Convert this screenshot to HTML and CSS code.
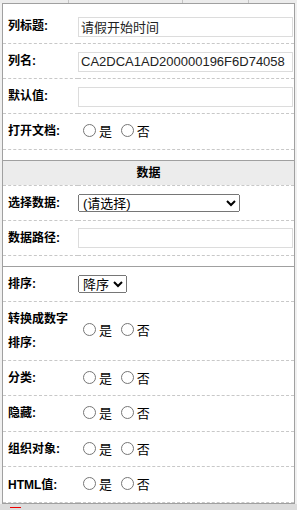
FILE: index.html
```html
<!DOCTYPE html>
<html lang="zh-CN">
<head>
  <meta charset="UTF-8" />
  <title>列属性</title>
  <link rel="stylesheet" href="styles.css">
</head>
<body>
  <div class="topbar">
    <span class="tab tab-a"></span>
    <span class="tab tab-b"></span>
    <span class="tab tab-c"></span>
  </div>

  <div class="panel">
    <table class="section first">
      <tr>
        <td class="label">列标题:</td>
        <td class="field"><input type="text" class="txt" value="请假开始时间" /></td>
      </tr>
      <tr>
        <td class="label">列名:</td>
        <td class="field"><input type="text" class="txt" value="CA2DCA1AD200000196F6D74058" /></td>
      </tr>
      <tr>
        <td class="label">默认值:</td>
        <td class="field"><input type="text" class="txt" value="" /></td>
      </tr>
      <tr>
        <td class="label">打开文档:</td>
        <td class="field">
          <input type="radio" name="openDoc" /><span class="opt">是</span>
          <input type="radio" name="openDoc" /><span class="opt">否</span>
        </td>
      </tr>
    </table>

    <table class="section">
      <tr>
        <td class="group-title" colspan="2">数据</td>
      </tr>
      <tr>
        <td class="label">选择数据:</td>
        <td class="field">
          <select class="sel sel-data">
            <option>(请选择)</option>
          </select>
        </td>
      </tr>
      <tr>
        <td class="label">数据路径:</td>
        <td class="field"><input type="text" class="txt" value="" /></td>
      </tr>
    </table>

    <table class="section last">
      <tr>
        <td class="label">排序:</td>
        <td class="field">
          <select class="sel">
            <option>降序</option>
            <option>升序</option>
          </select>
        </td>
      </tr>
      <tr>
        <td class="label">转换成数字排序:</td>
        <td class="field">
          <input type="radio" name="numSort" /><span class="opt">是</span>
          <input type="radio" name="numSort" /><span class="opt">否</span>
        </td>
      </tr>
      <tr>
        <td class="label">分类:</td>
        <td class="field">
          <input type="radio" name="group" /><span class="opt">是</span>
          <input type="radio" name="group" /><span class="opt">否</span>
        </td>
      </tr>
      <tr>
        <td class="label">隐藏:</td>
        <td class="field">
          <input type="radio" name="hidden" /><span class="opt">是</span>
          <input type="radio" name="hidden" /><span class="opt">否</span>
        </td>
      </tr>
      <tr>
        <td class="label">组织对象:</td>
        <td class="field">
          <input type="radio" name="orgObj" /><span class="opt">是</span>
          <input type="radio" name="orgObj" /><span class="opt">否</span>
        </td>
      </tr>
      <tr>
        <td class="label">HTML值:</td>
        <td class="field">
          <input type="radio" name="htmlVal" /><span class="opt">是</span>
          <input type="radio" name="htmlVal" /><span class="opt">否</span>
        </td>
      </tr>
    </table>
  </div>

  <div class="footer">
    <span class="marker"></span>
  </div>
</body>
</html>
```

FILE: styles.css
```css
body {
  margin: 0;
  background-color: #f0f0f0;
  font-family: 'Liberation Sans', 'Noto Sans CJK SC', sans-serif;
  color: #000;
}

.topbar {
  display: flex;
  height: 3px;
  background-color: #ececec;
}

.tab {
  height: 3px;
  border-right: 1px solid #c4c4c4;
}

.tab-a { width: 68px; }
.tab-b { width: 113px; }
.tab-c { width: 65px; }

.panel {
  margin-left: 2px;
  width: 291px;
  border: 1px solid #a0a0a0;
  background-color: #fff;
}

.section {
  width: 100%;
  border-collapse: collapse;
  margin-bottom: 10px;
  border-top: 1px solid #a0a0a0;
}

.section.first {
  border-top: none;
  margin-top: 5px;
}

.section.last {
  margin-bottom: 0;
}

.section tr {
  border-bottom: 1px dashed #c8c8c8;
}

.section td {
  padding: 5px 0;
  line-height: 24px;
  vertical-align: middle;
}

.label {
  width: 64px;
  padding-left: 5px !important;
  padding-right: 6px !important;
  font-size: 12px;
  font-weight: bold;
  word-break: break-all;
}

.field {
  padding-right: 1px !important;
  font-size: 13px;
  white-space: nowrap;
}

.group-title {
  padding: 0 !important;
  height: 24px;
  background-color: #ececec;
  text-align: center;
  font-size: 12px;
  font-weight: bold;
}

.txt {
  box-sizing: border-box;
  width: 215px;
  height: 20px;
  margin: 0;
  padding: 0 2px;
  border: 1px solid #dcdcdc;
  font-family: 'Liberation Sans', 'Noto Sans CJK SC', sans-serif;
  font-size: 13px;
  color: #222;
  vertical-align: middle;
}

.txt:focus {
  outline: none;
  border-color: #a0a0a0;
}

.sel {
  height: 18px;
  margin: 0;
  font-family: 'Liberation Sans', 'Noto Sans CJK SC', sans-serif;
  font-size: 13px;
  vertical-align: middle;
}

.sel-data {
  width: 162px;
}

.field input[type="radio"] {
  vertical-align: middle;
  margin: 0 3px 2px 5px;
}

.opt {
  vertical-align: middle;
}

.footer {
  height: 6px;
  padding-left: 10px;
  background-color: #dcdcdc;
}

.marker {
  display: inline-block;
  width: 11px;
  height: 1px;
  margin-top: 3px;
  vertical-align: top;
  background-color: #e00;
}
```
